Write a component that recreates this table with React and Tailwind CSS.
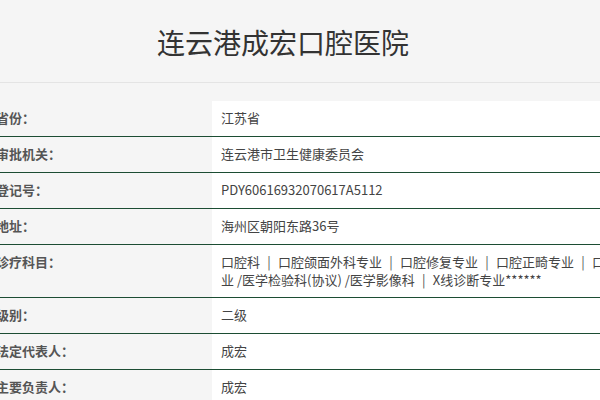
const rows = [
  { label: '省份：', value: '江苏省' },
  { label: '审批机关：', value: '连云港市卫生健康委员会' },
  { label: '登记号：', value: 'PDY60616932070617A5112' },
  { label: '地址：', value: '海州区朝阳东路36号' },
  { label: '诊疗科目：', multi: true },
  { label: '级别：', value: '二级' },
  { label: '法定代表人：', value: '成宏' },
  { label: '主要负责人：', value: '成宏' },
];

function Sep() {
  return <span className="inline-block w-[18px] text-center text-[#555]">|</span>;
}

export default function App() {
  return (
    <div
      className="min-h-[400px] w-full overflow-hidden bg-[#f5f5f5] text-[13px] leading-[18px]"
      style={{ fontFamily: '"Microsoft YaHei", "Noto Sans CJK SC", sans-serif' }}
    >
      <header className="flex h-[83px] items-center border-b border-[#e4e4e4] pl-[157px] pt-[1px]">
        <h1 className="text-[28px] leading-none text-[#333]">连云港成宏口腔医院</h1>
      </header>

      <div className="mt-[18px]">
        {rows.map((row) => (
          <div key={row.label} className="flex border-b border-[#1c4d33]">
            <div className="w-[212px] shrink-0 pt-2 pb-[9px] font-bold text-[#555]">
              <span className="-ml-1 whitespace-nowrap">{row.label}</span>
            </div>
            <div className="flex-1 overflow-hidden bg-white pt-2 pb-[9px] pl-[9px] text-[#444]">
              {row.multi ? (
                <div className="-mb-px">
                  <div className="whitespace-nowrap">
                    口腔科<Sep />口腔颌面外科专业<Sep />口腔修复专业<Sep />口腔正畸专业<Sep />口腔预防专
                  </div>
                  <div className="whitespace-nowrap">
                    业 /医学检验科(协议) /医学影像科<Sep />X线诊断专业******
                  </div>
                </div>
              ) : (
                <span className="whitespace-nowrap">{row.value}</span>
              )}
            </div>
          </div>
        ))}
      </div>
    </div>
  );
}
